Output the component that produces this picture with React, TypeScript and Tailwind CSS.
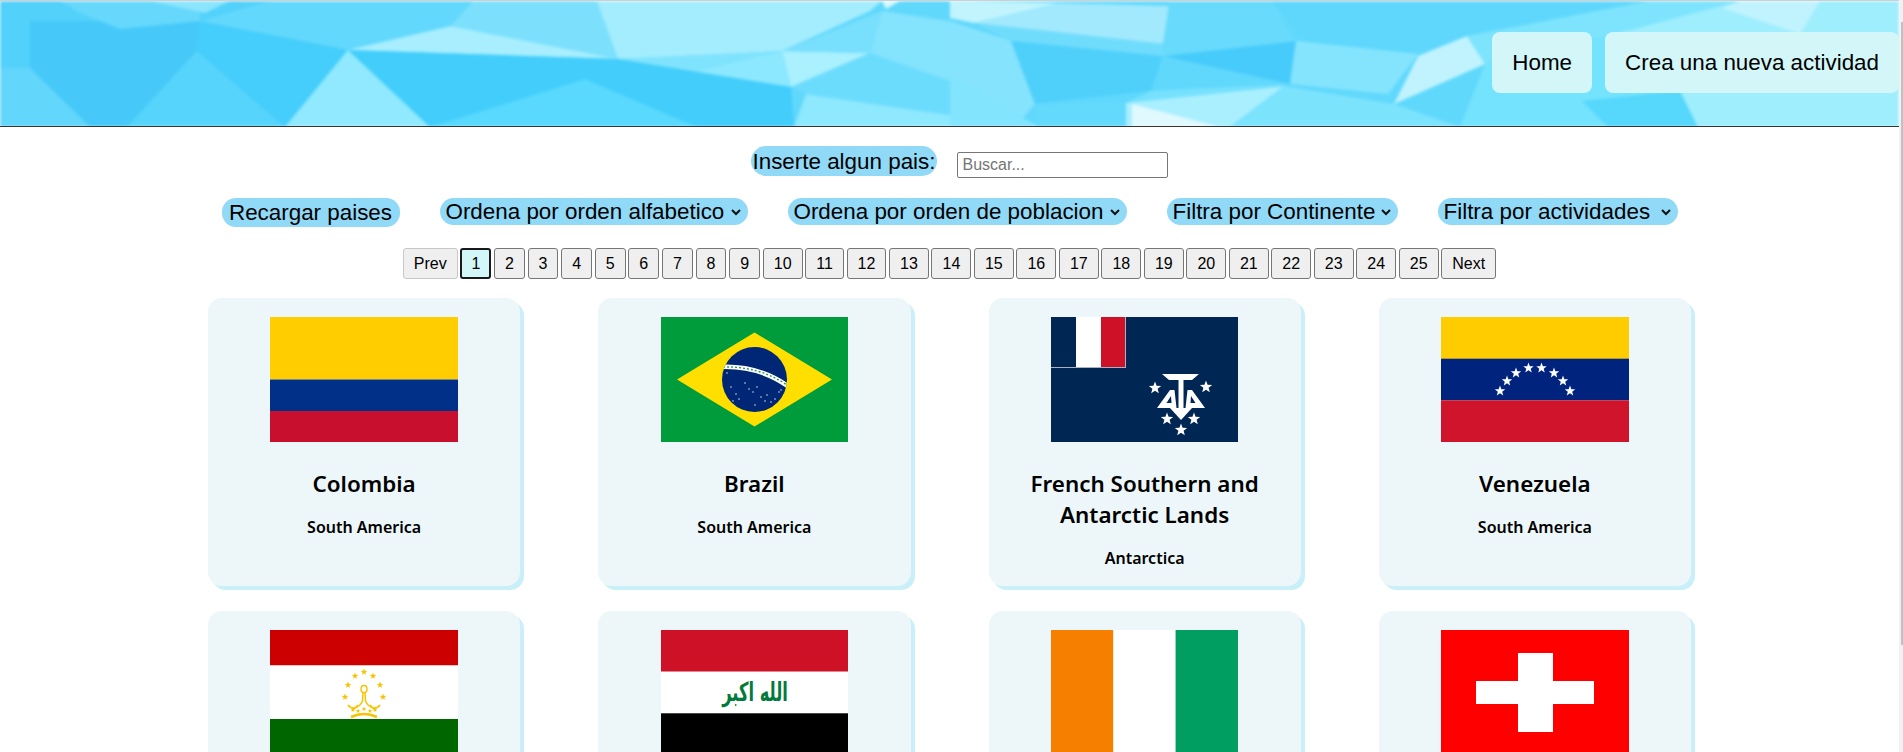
import React from "react";

const POLYS: [string, string][] = [
  ["0,0 350,0 348,49 285,126 0,126", "#52d1fb"],
  ["30,20 200,20 197,50 127,126 90,126 30,67", "#46c9f9"],
  ["197,50 285,126 127,126", "#56d4fb"],
  ["0,67 30,67 90,126 0,126", "#62d6fb"],
  ["60,0 200,0 200,20 120,28 80,12", "#66d8fc"],
  ["200,20 348,49 285,126 197,50", "#45cdfb"],
  ["200,20 270,0 473,0 451,25 348,49", "#62d8fc"],
  ["150,0 230,0 205,12", "#8be5fd"],
  ["348,49 285,126 430,126", "#90e9fe"],
  ["348,49 451,25 618,58", "#a8eefe"],
  ["451,25 473,0 597,0 618,58", "#7ce0fd"],
  ["597,0 882,0 870,10 782,50 618,58", "#a4edfe"],
  ["618,58 782,50 690,72", "#80e3fd"],
  ["782,50 870,52 791,86", "#aaf0fe"],
  ["690,72 782,50 791,86", "#8ce8fe"],
  ["348,49 618,58 791,86 794,126 430,126", "#42cdfb"],
  ["585,78 430,126 697,126", "#58d9fd"],
  ["806,93 794,126 950,126 950,114", "#8ee8fe"],
  ["791,86 870,52 950,80 950,114 806,93", "#6cdcfd"],
  ["782,50 882,10 870,52", "#78dffd"],
  ["882,10 950,20 950,80 870,52", "#84e3fd"],
  ["882,0 900,0 886,8", "#d6f8ff"],
  ["950,20 1011,40 1035,103 1023,117 950,73", "#86e3fd"],
  ["950,73 1023,117 1040,126 950,126", "#82e4fd"],
  ["950,0 1059,2 974,22 950,17", "#c2f4fe"],
  ["1059,2 1169,5 1163,43 974,22", "#a2e9fd"],
  ["974,22 1163,43 1163,55 1011,40", "#70dcfc"],
  ["1011,40 1163,55 1151,90 1035,103", "#4fd0fb"],
  ["1163,55 1296,40 1290,83", "#47cbfb"],
  ["1169,0 1272,0 1296,40 1163,55", "#68dafc"],
  ["1272,0 1649,0 1467,35 1418,53 1309,40", "#5fd7fc"],
  ["1151,90 1290,83 1126,102", "#77e1fd"],
  ["1035,103 1126,102 1126,126 1040,126", "#63d9fc"],
  ["1126,102 1284,85 1230,126 1126,126", "#a9effe"],
  ["1132,103 1220,126 1132,126", "#e0f9ff"],
  ["1296,40 1418,53 1388,93 1290,83", "#85e4fd"],
  ["1418,55 1467,35 1485,63 1394,103", "#c0f3fe"],
  ["1284,85 1394,103 1460,126 1230,126", "#7ce3fd"],
  ["1467,35 1649,0 1740,0 1619,32 1485,63", "#7ee4fd"],
  ["1485,63 1619,32 1899,126 1460,126", "#74e3fd"],
  ["1582,100 1680,90 1698,126 1608,126", "#56d7fc"],
  ["1740,0 1899,0 1899,126 1698,126 1680,90 1619,32", "#9feefe"],
  ["1740,0 1820,0 1800,33 1722,7", "#c0f3fe"],
];

function starPoints(cx: number, cy: number, r: number) {
  const pts: string[] = [];
  for (let i = 0; i < 10; i++) {
    const rad = i % 2 === 0 ? r : r * 0.42;
    const a = -Math.PI / 2 + (i * Math.PI) / 5;
    pts.push(`${cx + rad * Math.cos(a)},${cy + rad * Math.sin(a)}`);
  }
  return pts.join(" ");
}

function Flag({ w, children }: { w: number; children: React.ReactNode }) {
  return (
    <svg viewBox={`0 0 ${w} 125`} width={w} height={125} className="block shrink-0">
      {children}
    </svg>
  );
}

const Colombia = () => (
  <Flag w={188}>
    <rect width="188" height="62.5" fill="#ffcd00" />
    <rect y="62.5" width="188" height="31.5" fill="#003087" />
    <rect y="94" width="188" height="31" fill="#c8102e" />
  </Flag>
);

const Brazil = () => {
  const dots = [[70,70],[75,77],[78,82],[84,66],[88,72],[92,75],[96,70],[100,80],[104,84],[110,85],[114,82],[118,75],[120,73],[66,56],[94,88],[72,84],[106,78]];
  return (
    <Flag w={187}>
      <defs>
        <clipPath id="brc"><circle cx="93.5" cy="62.5" r="32.5" /></clipPath>
      </defs>
      <rect width="187" height="125" fill="#009c3b" />
      <polygon points="16,62.5 93.5,15.5 171,62.5 93.5,109.5" fill="#fedf00" />
      <circle cx="93.5" cy="62.5" r="32.5" fill="#002776" />
      <g clipPath="url(#brc)">
        <path d="M58 50 Q 98 48 128 70" fill="none" stroke="#fff" strokeWidth="4.5" />
        <path d="M62 50 Q 98 49 126 68" fill="none" stroke="#2a9a5c" strokeWidth="1.4" strokeDasharray="2 2" />
      </g>
      {dots.map(([x, y], i) => (
        <circle key={i} cx={x} cy={y} r="0.7" fill="#fff" />
      ))}
    </Flag>
  );
};

const Taaf = () => (
  <Flag w={187}>
    <rect width="187" height="125" fill="#002654" />
    <rect width="75" height="51" fill="#aab2c4" />
    <rect width="25" height="50" fill="#002654" />
    <rect x="25" width="25" height="50" fill="#fff" />
    <rect x="50" width="24" height="50" fill="#ce1126" />
    <g fill="#fff">
      {[[104,71],[155,70],[116,102],[143,102],[130,113]].map(([x, y], i) => (
        <polygon key={i} points={starPoints(x, y, 6.5)} />
      ))}
      <polygon points="111,57 148,57 141,63 132.5,63 132.5,92 127.5,92 127.5,63 118,63" />
      <path fillRule="evenodd" d="M106 91 L119 73 L123.5 73 L125.5 91 Z M120 79 L120.5 86 L115.5 86 Z" />
      <path fillRule="evenodd" d="M154 91 L141 73 L136.5 73 L134.5 91 Z M140 79 L139.5 86 L144.5 86 Z" />
      <polygon points="119,91 141,91 130,103" />
    </g>
  </Flag>
);

const Venezuela = () => (
  <Flag w={188}>
    <rect width="188" height="42" fill="#ffcc00" />
    <rect y="41.7" width="188" height="41.6" fill="#00247d" />
    <rect y="83.3" width="188" height="41.7" fill="#cf142b" />
    {[[59,74],[66,64],[75,56],[87.5,51],[100.5,51],[113,56],[122,64],[129,74]].map(([x, y], i) => (
      <polygon key={i} points={starPoints(x, y, 5.5)} fill="#fff" />
    ))}
  </Flag>
);

const Tajikistan = () => (
  <Flag w={188}>
    <rect width="188" height="35.5" fill="#cc0000" />
    <rect y="35.5" width="188" height="54" fill="#fff" />
    <rect y="89" width="188" height="36" fill="#006600" />
    {[[94,42],[85,46],[103,46],[78,55],[110,55],[75,67],[113,67]].map(([x, y], i) => (
      <polygon key={i} points={starPoints(x, y, 3.4)} fill="#f8c300" />
    ))}
    <g fill="none" stroke="#f8c300" strokeWidth="1.5">
      <ellipse cx="94" cy="59" rx="3" ry="3.6" />
      <path d="M93 62.5 L92.5 71 Q 90 77 84 78 Q 80 78 78 75" />
      <path d="M95 62.5 L95.5 71 Q 98 77 104 78 Q 108 78 110 75" />
      <path d="M82 80 Q 86 78 88 75 M106 80 Q 102 78 100 75" />
      <path d="M81 87 Q 94 81 107 87" strokeWidth="2.6" />
    </g>
    {[[83,80],[94,79],[105,80],[88,81],[100,81]].map(([x, y], i) => (
      <polygon key={i} points={starPoints(x, y, 2.5)} fill="#f8c300" />
    ))}
  </Flag>
);

const Iraq = () => (
  <Flag w={187}>
    <rect width="187" height="41.7" fill="#ce1126" />
    <rect y="41.7" width="187" height="41.6" fill="#fff" />
    <rect y="83.3" width="187" height="41.7" fill="#000" />
    <text
      transform="translate(94 71) scale(0.74 1.2)"
      textAnchor="middle"
      direction="rtl"
      fill="#007a3d"
      fontSize="22"
      fontWeight="700"
      fontFamily="'DejaVu Sans', sans-serif"
    >
      الله اكبر
    </text>
  </Flag>
);

const IvoryCoast = () => (
  <Flag w={187}>
    <rect width="62.4" height="125" fill="#f77f00" />
    <rect x="62.4" width="62.2" height="125" fill="#fff" />
    <rect x="124.6" width="62.4" height="125" fill="#009e60" />
  </Flag>
);

const Switzerland = () => (
  <Flag w={188}>
    <rect width="188" height="125" fill="#ff0000" />
    <rect x="77" y="23" width="35" height="79" fill="#fff" />
    <rect x="35" y="51" width="118" height="23" fill="#fff" />
  </Flag>
);

const CARDS: { name: string; region: string; flag: React.ReactNode }[] = [
  { name: "Colombia", region: "South America", flag: <Colombia /> },
  { name: "Brazil", region: "South America", flag: <Brazil /> },
  { name: "French Southern and Antarctic Lands", region: "Antarctica", flag: <Taaf /> },
  { name: "Venezuela", region: "South America", flag: <Venezuela /> },
  { name: "Tajikistan", region: "Asia", flag: <Tajikistan /> },
  { name: "Iraq", region: "Asia", flag: <Iraq /> },
  { name: "Ivory Coast", region: "Africa", flag: <IvoryCoast /> },
  { name: "Switzerland", region: "Europe", flag: <Switzerland /> },
];

const PAGES = Array.from({ length: 25 }, (_, i) => i + 1);

function Filter({ label, width }: { label: string; width: string }) {
  return (
    <div className={`relative h-[27px] ${width}`}>
      <select className="h-full w-full appearance-none rounded-[14px] bg-[#90d9f7] pl-[6px] text-[22.4px] leading-[25px] text-black">
        <option>{label}</option>
      </select>
      <svg
        viewBox="0 0 10 7"
        className="pointer-events-none absolute right-[7px] top-[11px] h-[7px] w-[10px]"
        fill="none"
        stroke="#111"
        strokeWidth="2"
      >
        <path d="M1 1 L5 5 L9 1" />
      </svg>
    </div>
  );
}

export default function App() {
  return (
    <div className="flex h-[752px] w-[1903px] overflow-hidden bg-white font-['Liberation_Sans',Arial,sans-serif] text-black">
      <main className="w-[1899px] shrink-0">
        <header className="relative h-[127px] overflow-hidden border-b border-t border-b-[#3a332c] border-t-[#cfcfcf]">
          <svg
            viewBox="0 0 1899 126"
            preserveAspectRatio="none"
            className="absolute left-0 top-0 h-[126px] w-[1899px] blur-[1.5px]"
          >
            <rect x="-10" y="-10" width="1920" height="146" fill="#60d8fc" />
            {POLYS.map(([points, fill], i) => (
              <polygon key={i} points={points} fill={fill} />
            ))}
          </svg>
          <nav className="relative flex justify-end gap-[13px] pt-[31px]">
            <a className="flex h-[61px] items-center rounded-[8px] bg-[#d3f6f8] px-[20px] text-[22.4px]">Home</a>
            <a className="flex h-[61px] items-center rounded-[8px] bg-[#d3f6f8] px-[20px] text-[22.4px]">
              Crea una nueva actividad
            </a>
          </nav>
        </header>

        <div className="flex items-start justify-center gap-[20px] pl-[20px] pt-[19px]">
          <label className="h-[30px] rounded-[15px] bg-[#90d9f7] px-[2px] pt-[2px] text-[22.4px] leading-[28px]">
            Inserte algun pais:
          </label>
          <input
            placeholder="Buscar..."
            className="mt-[6px] h-[26px] w-[211px] rounded-[2px] border border-[#767676] px-[4px] text-[16px] placeholder:text-[#757575]"
          />
        </div>

        <div className="flex items-start justify-center gap-[40px] pt-[20px]">
          <button className="h-[29px] w-[178px] rounded-[14px] bg-[#90d9f7] text-[22.4px] leading-[25px]">
            Recargar paises
          </button>
          <Filter label="Ordena por orden alfabetico" width="w-[308px]" />
          <Filter label="Ordena por orden de poblacion" width="w-[339px]" />
          <Filter label="Filtra por Continente" width="w-[231px]" />
          <Filter label="Filtra por actividades" width="w-[240px]" />
        </div>

        <div className="flex justify-center gap-[2.7px] pt-[21px] text-[16px]">
          <button className="h-[31px] rounded-[3px] border border-[#c8c8c8] bg-[#efefef] px-[10px]">Prev</button>
          {PAGES.map((p) => (
            <button
              key={p}
              className={
                p === 1
                  ? "h-[31px] rounded-[3px] border-2 border-[#1a1a1a] bg-[#d3f6f8] px-[9px]"
                  : "h-[31px] rounded-[3px] border border-[#767676] bg-[#efefef] px-[10px]"
              }
            >
              {p}
            </button>
          ))}
          <button className="h-[31px] rounded-[3px] border border-[#767676] bg-[#efefef] px-[10px]">Next</button>
        </div>

        <div className="mx-auto mt-[19px] grid w-[1483px] grid-cols-4 gap-x-[78px] gap-y-[25px] font-['Noto_Sans','Open_Sans',sans-serif]">
          {CARDS.map((c) => (
            <article
              key={c.name}
              className="flex h-[288px] flex-col items-center rounded-[14px] bg-[#edf7f9] px-[30px] pt-[19px] text-center shadow-[4px_4px_0_#c9eff8]"
            >
              {c.flag}
              <h2 className="mt-[26px] text-[22.4px] font-semibold leading-[31px]">{c.name}</h2>
              <p className="mt-[17px] text-[16px] font-semibold leading-[22px]">{c.region}</p>
            </article>
          ))}
        </div>
      </main>
      <div className="flex w-[4px] shrink-0 items-start justify-end bg-[#f1f1f1] pt-[22px]">
        <div className="h-[623px] w-[2px] bg-[#c1c1c1]" />
      </div>
    </div>
  );
}
